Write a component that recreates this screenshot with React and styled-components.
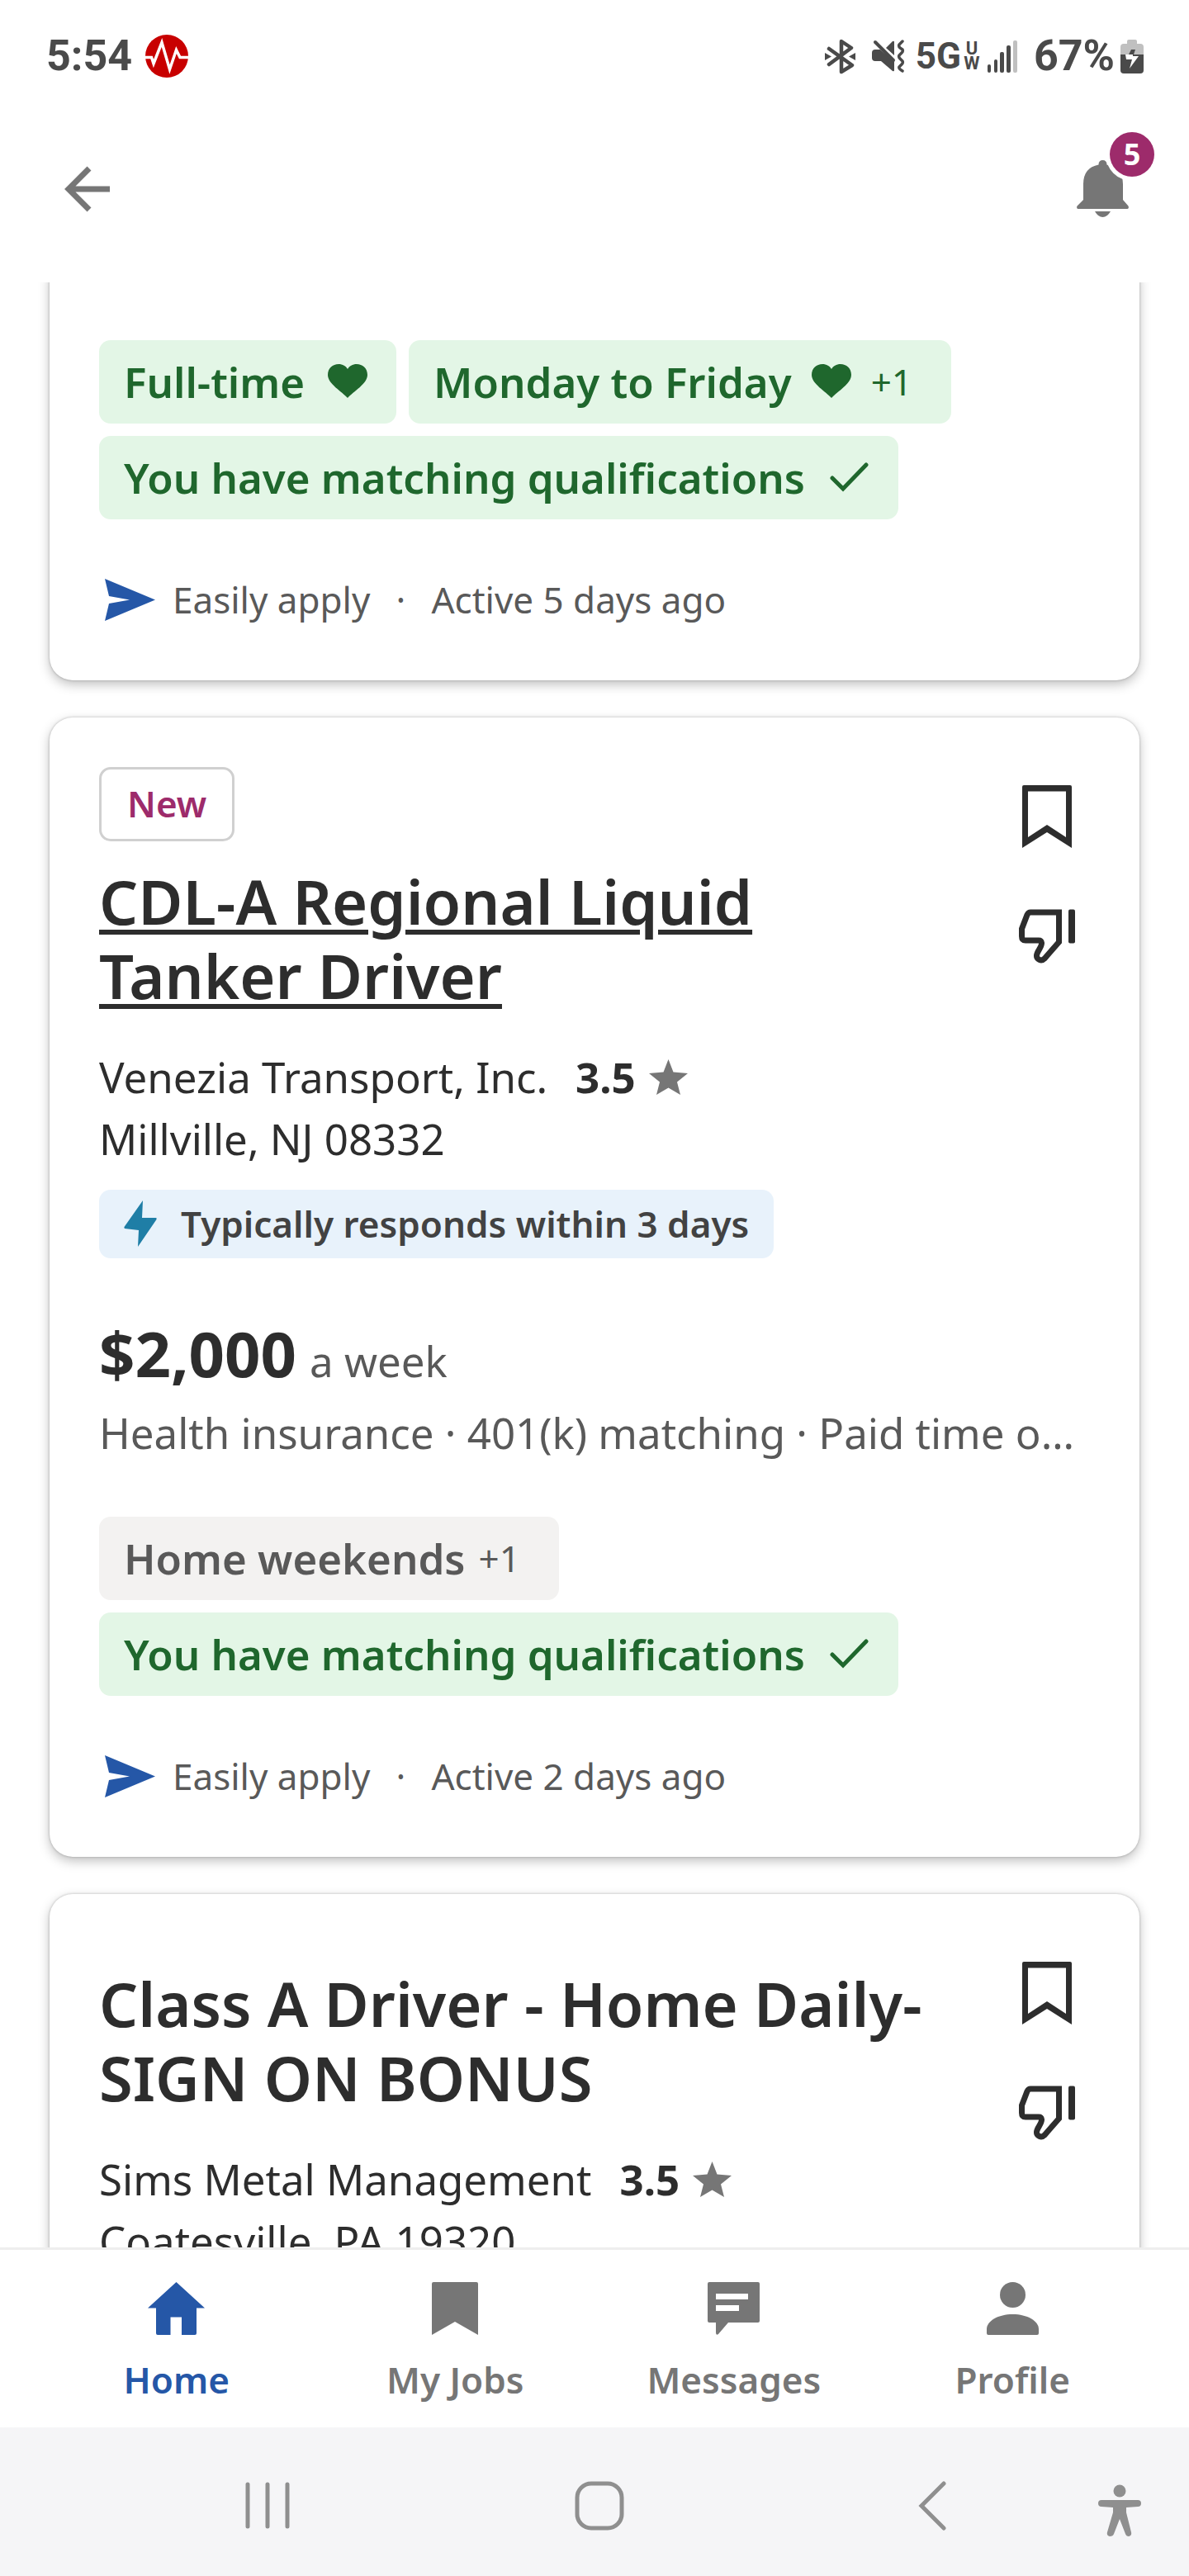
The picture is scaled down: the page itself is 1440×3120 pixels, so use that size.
import styled, { createGlobalStyle } from "styled-components"

const GlobalStyle = createGlobalStyle`
    * {
        box-sizing: border-box;
        margin: 0;
        padding: 0;
    }

    body {
        background-color: #ffffff;
        color: #2d2d2d;
        font-family: "Noto Sans", sans-serif;
    }

    button {
        border: none;
        background-color: transparent;
        font-family: inherit;
        cursor: pointer;
    }

    svg {
        display: block;
        flex-shrink: 0;
    }
`;

const Screen = styled.div`
    height: 100vh;
    display: flex;
    flex-direction: column;
`;

const StatusBarSty = styled.div`
    height: 136px;
    padding: 0 55px 0 56px;
    display: flex;
    align-items: center;
    justify-content: space-between;
    font-family: Roboto, sans-serif;
    font-weight: 700;
    color: #4a4a4a;

    .group {
        display: flex;
        align-items: center;
    }

    .big {
        font-size: 52px;
        line-height: 60px;
    }

    .network {
        font-size: 44px;
        line-height: 60px;
        margin-left: 13px;
    }

    .band {
        width: 22px;
        margin: 0 8px 0 2px;
        font-size: 22px;
        line-height: 18px;
        text-align: center;
    }
`;

const StatusIcon = styled.svg`
    margin-left: ${({ $gap }) => $gap}px;
`;

const HeaderSty = styled.header`
    height: 206px;
    padding: 0 73px 20px 78px;
    display: flex;
    align-items: center;
    justify-content: space-between;

    .bell {
        position: relative;
    }

    .count {
        position: absolute;
        top: -34px;
        right: -31px;
        width: 54px;
        height: 54px;
        border-radius: 50%;
        background-color: #9d2b6b;
        box-shadow: 0 0 0 5px #ffffff;
        color: #ffffff;
        font-size: 36px;
        font-weight: 700;
        line-height: 54px;
        text-align: center;
    }
`;

const Feed = styled.main`
    flex: 1;
    min-height: 0;
    overflow: hidden;
    padding: 0 60px;
    display: flex;
    flex-direction: column;
    gap: 45px;
`;

const CardSty = styled.article`
    flex-shrink: 0;
    margin-top: ${({ $scrolled }) => ($scrolled ? "-30px" : "0")};
    padding: ${({ $scrolled }) => ($scrolled ? "100px" : "60px")} 60px 68px;
    border-radius: 28px;
    background-color: #ffffff;
    box-shadow: 0 0 3px rgba(0, 0, 0, 0.25), 0 5px 14px rgba(0, 0, 0, 0.25);
`;

const CardTop = styled.div`
    display: grid;
    grid-template-columns: 1fr 104px;
    align-items: start;
`;

const Actions = styled.div`
    display: flex;
    flex-direction: column;
    gap: 25px;

    button {
        height: 120px;
        display: flex;
        align-items: center;
        justify-content: center;
    }
`;

const NewTag = styled.span`
    display: inline-block;
    height: 90px;
    padding: 0 31px;
    border: 3px solid #d0d0d0;
    border-radius: 14px;
    vertical-align: top;
    font-size: 44px;
    font-weight: 600;
    line-height: 82px;
    color: #9d2b6b;
`;

const Title = styled.h2`
    margin: 28px 60px 40px 0;
    font-size: 74px;
    font-weight: 600;
    line-height: 90px;

    a {
        color: inherit;
        text-decoration: ${({ $underlined }) => ($underlined ? "underline" : "none")};
        text-decoration-thickness: 6px;
        text-underline-offset: 6px;
    }
`;

const Company = styled.p`
    display: flex;
    align-items: center;
    font-size: 51px;
    line-height: 75px;

    strong {
        margin: 0 16px 0 34px;
        font-weight: 700;
    }
`;

const Responds = styled.p`
    width: fit-content;
    height: 83px;
    margin-top: 24px;
    padding: 0 30px 2px;
    border-radius: 14px;
    display: flex;
    align-items: center;
    gap: 29px;
    background-color: #e8f2fb;
    font-size: 44px;
    font-weight: 600;
    color: #424242;
`;

const Salary = styled.p`
    margin-top: 70px;
    display: flex;
    align-items: baseline;
    gap: 16px;
    font-size: 51px;
    line-height: 60px;
    color: #595959;

    strong {
        font-size: 76px;
        font-weight: 700;
        line-height: 90px;
        color: #2d2d2d;
    }
`;

const Benefits = styled.p`
    margin-top: 14px;
    overflow: hidden;
    font-size: 51px;
    line-height: 75px;
    color: #595959;
    text-overflow: ellipsis;
    white-space: nowrap;
`;

const Chips = styled.ul`
    margin-top: ${({ $first }) => ($first ? "0" : "64px")};
    display: flex;
    flex-wrap: wrap;
    gap: 15px;
    list-style: none;
`;

const Chip = styled.li`
    height: 101px;
    padding: 0 ${({ $end }) => $end || 35}px 2px 30px;
    border-radius: 14px;
    display: flex;
    align-items: center;
    gap: ${({ $gap }) => $gap || 28}px;
    background-color: ${({ $match }) => ($match ? "#e3f6e6" : "#f3f2f1")};
    font-size: 51px;
    font-weight: 600;
    color: ${({ $match }) => ($match ? "#1f672d" : "#595959")};

    .more {
        font-size: 44px;
        font-weight: 400;
    }
`;

const Apply = styled.p`
    margin-top: 67px;
    padding-left: 6px;
    display: flex;
    align-items: center;
    font-size: 44px;
    line-height: 60px;
    color: #595959;

    svg {
        margin-right: 20px;
    }

    .dot {
        width: 74px;
        text-align: center;
    }
`;

const TabBar = styled.nav`
    height: 218px;
    padding: 0 45px;
    border-top: 3px solid #eeeeee;
    display: grid;
    grid-template-columns: repeat(4, 1fr);

    a {
        padding-top: 39px;
        display: flex;
        flex-direction: column;
        align-items: center;
        gap: 24px;
        font-size: 44px;
        font-weight: 600;
        line-height: 60px;
        color: #767676;
        text-decoration: none;
    }

    .active {
        color: #2557a7;
    }
`;

const SystemBar = styled.div`
    height: 180px;
    padding: 10px 58px 0 123px;
    display: grid;
    grid-template-columns: repeat(3, 1fr) 52px;
    align-items: center;
    background-color: #f5f5f7;

    button {
        display: flex;
        justify-content: center;
    }

    .assist {
        padding-top: 12px;
    }
`;

function Heart() {
    return (
        <svg width="48" height="41" viewBox="0 0 48 41" fill="currentColor">
            <path d="M24 41C17 33 0 24 0 13 0 5 6 0 13 0c5 0 9 2.5 11 6 2-3.5 6-6 11-6 7 0 13 5 13 13 0 11-17 20-24 28z" />
        </svg>
    )
}

function Check() {
    return (
        <svg width="50" height="38" viewBox="0 0 50 38" fill="none" stroke="currentColor" strokeWidth="5" strokeLinecap="round">
            <path d="M5 20l13 13L46 4" />
        </svg>
    )
}

function Star() {
    return (
        <svg width="47" height="43" viewBox="0 0 47 43" fill="#767676">
            <path d="M23.5 0l6 15.5L47 17 34 27.5 38 43l-14.5-8.5L9 43l4-15.5L0 17l17.5-1.5z" />
        </svg>
    )
}

function ApplyLine({ active }) {
    return (
        <Apply>
            <svg width="63" height="51" viewBox="0 0 63 51" fill="#2557a7">
                <path d="M1 0l61 25.5L1 51l5-21 25-4.5L6 21z" />
            </svg>
            <span>Easily apply</span>
            <span className="dot">·</span>
            <span>{active}</span>
        </Apply>
    )
}

function JobHead({ job }) {
    return (
        <CardTop>
            <div>
                {job.isNew && <NewTag>New</NewTag>}
                <Title $underlined={job.isNew}>
                    <a href="#job">{job.title}</a>
                </Title>
                <Company>
                    {job.company}
                    <strong>{job.rating}</strong>
                    <Star />
                </Company>
                <Company>{job.location}</Company>
            </div>
            <Actions>
                <button aria-label="Save job">
                    <svg width="60" height="76" viewBox="0 0 60 76" fill="#2d2d2d" fillRule="evenodd">
                        <path d="M2 0H58Q60 0 60 2V76L30 57 0 76V2Q0 0 2 0zM7 7.5V63L30 48 53 63V7.5z" />
                    </svg>
                </button>
                <button aria-label="Not interested">
                    <svg width="68" height="66" viewBox="0 0 68 66" fill="none" stroke="#2d2d2d" strokeWidth="7">
                        <path d="M14 4H48.5V40L31 60C27 64 21 61 21.5 56 22 51 28 46 27.5 41Q27 38 24 38H8Q3.5 38 3.5 33V24L10 7Q11.5 4 14 4z" />
                        <rect x="60" y="0.5" width="8" height="41" rx="2" fill="#2d2d2d" stroke="none" />
                    </svg>
                </button>
            </Actions>
        </CardTop>
    )
}

function StatusBar() {
    return (
        <StatusBarSty>
            <div className="group">
                <span className="big">5:54</span>
                <StatusIcon $gap={16} width="52" height="52" viewBox="0 0 52 52" fill="none">
                    <circle cx="26" cy="26" r="26" fill="#c80000" />
                    <path d="M0 27.5H7.5L10 35 20 9.5 29.5 42 37.5 18.5 42 27.5H52" stroke="#ffffff" strokeWidth="3.5" />
                </StatusIcon>
            </div>
            <div className="group">
                <svg width="37" height="43" viewBox="0 0 37 43" fill="none" stroke="currentColor" strokeWidth="4.5" strokeLinejoin="round" strokeLinecap="round">
                    <path d="M5 12L33 32 20 40V3L32 11 5 31" />
                    <path d="M0 17v9l8-4.5zM37 17v9l-8-4.5z" fill="currentColor" stroke="none" />
                </svg>
                <StatusIcon $gap={20} width="40" height="40" viewBox="0 0 40 40" fill="currentColor">
                    <path d="M4 12H10L27 27V37Q27 39 25 38L11 26H4Q0 26 0 22V16Q0 12 4 12zM17 10l8-8q2-1 2 1v16z" />
                    <path d="M4 3l22 22" stroke="currentColor" strokeWidth="4" strokeLinecap="round" />
                    <path d="M37 2L33 6Q32 8 34 10L37 12Q38 14 36 16L33 19Q32 21 34 23L37 26Q38 28 36 30L33 33Q32 35 37 38" fill="none" stroke="currentColor" strokeWidth="3.5" strokeLinecap="round" />
                </StatusIcon>
                <span className="network">5G</span>
                <span className="band">U W</span>
                <svg width="36" height="39" viewBox="0 0 36 39" fill="currentColor">
                    <rect x="0" y="29" width="4" height="10" rx="2" />
                    <rect x="8" y="23" width="4" height="16" rx="2" />
                    <rect x="15" y="14" width="5" height="25" rx="2" />
                    <rect x="23" y="6" width="5" height="33" rx="2" />
                    <rect x="31" y="0" width="5" height="39" rx="2" fill="#c0c0c0" />
                </svg>
                <StatusIcon as="span" className="big" $gap={20}>67%</StatusIcon>
                <StatusIcon $gap={7} width="28" height="41" viewBox="0 0 28 41">
                    <path d="M8 5V2Q8 0 10 0H18Q20 0 20 2V5H24Q28 5 28 9V18H0V9Q0 5 4 5z" fill="#c0c0c0" />
                    <path d="M0 18H28V37Q28 41 24 41H4Q0 41 0 37z" fill="currentColor" />
                    <path d="M13 12h5l-2 6h-6z" fill="currentColor" />
                    <path d="M6 18h9v2h7L11 35l3-11H7z" fill="#ffffff" />
                </StatusIcon>
            </div>
        </StatusBarSty>
    )
}

function Header() {
    return (
        <HeaderSty>
            <button aria-label="Back">
                <svg width="56" height="56" viewBox="0 0 56 56" fill="none" stroke="#767676" strokeWidth="7">
                    <path d="M30 3L5 28l25 25M5 28H55" />
                </svg>
            </button>
            <button className="bell" aria-label="Notifications">
                <svg width="63" height="70" viewBox="0 0 63 70" fill="#767676">
                    <path d="M31.5 0q5 0 5 5.5Q56 10 56 29V48l6.5 7.5Q64 59 60 59H3Q-1 59 0.5 55.5L8 48V29Q8 9 26.5 5.5 26.5 0 31.5 0z" />
                    <path d="M22 62H41Q37 69 31.5 69T22 62z" />
                </svg>
                <span className="count">5</span>
            </button>
        </HeaderSty>
    )
}

const venezia = {
    isNew: true,
    title: "CDL-A Regional Liquid Tanker Driver",
    company: "Venezia Transport, Inc.",
    rating: "3.5",
    location: "Millville, NJ 08332",
}

const sims = {
    title: "Class A Driver - Home Daily- SIGN ON BONUS",
    company: "Sims Metal Management",
    rating: "3.5",
    location: "Coatesville, PA 19320",
}

export default function App() {
    return (
        <Screen>
            <GlobalStyle />
            <StatusBar />
            <Header />
            <Feed>
                <CardSty $scrolled>
                    <Chips $first>
                        <Chip $match>Full-time <Heart /></Chip>
                        <Chip $match $end={47} $gap={24}>
                            Monday to Friday <Heart />
                            <span className="more">+1</span>
                        </Chip>
                        <Chip $match>You have matching qualifications <Check /></Chip>
                    </Chips>
                    <ApplyLine active="Active 5 days ago" />
                </CardSty>
                <CardSty>
                    <JobHead job={venezia} />
                    <Responds>
                        <svg width="40" height="56" viewBox="0 0 40 56" fill="#1f7ea6">
                            <path d="M23 0L22 21H39Q40 21 39.5 23L17 56 18 36 1 34Q0 33 0.5 32z" />
                        </svg>
                        Typically responds within 3 days
                    </Responds>
                    <Salary><strong>$2,000</strong> a week</Salary>
                    <Benefits>Health insurance · 401(k) matching · Paid time off · Dental insurance</Benefits>
                    <Chips>
                        <Chip $end={47} $gap={16}>
                            Home weekends
                            <span className="more">+1</span>
                        </Chip>
                        <Chip $match>You have matching qualifications <Check /></Chip>
                    </Chips>
                    <ApplyLine active="Active 2 days ago" />
                </CardSty>
                <CardSty>
                    <JobHead job={sims} />
                </CardSty>
            </Feed>
            <TabBar>
                <a href="#home" className="active">
                    <svg width="69" height="64" viewBox="0 0 69 64" fill="currentColor">
                        <path d="M34.5 0L69 31.5H59V62Q59 64 57 64H41V42.5H27.5V64H12Q10 64 10 62V31.5H0z" />
                    </svg>
                    Home
                </a>
                <a href="#my-jobs">
                    <svg width="56" height="64" viewBox="0 0 56 64" fill="currentColor">
                        <path d="M2 0H54Q56 0 56 2V64L28 48 0 64V2Q0 0 2 0z" />
                    </svg>
                    My Jobs
                </a>
                <a href="#messages">
                    <svg width="63" height="64" viewBox="0 0 63 64" fill="currentColor" fillRule="evenodd">
                        <path d="M2 0H61Q63 0 63 2V47Q63 49 61 49H25L13 63Q10 65 10 61V49H2Q0 49 0 47V2Q0 0 2 0zM10 14V21H49V14zM10 28V35H38V28z" />
                    </svg>
                    Messages
                </a>
                <a href="#profile">
                    <svg width="63" height="64" viewBox="0 0 63 64" fill="currentColor">
                        <circle cx="31.5" cy="15.5" r="15.5" />
                        <path d="M0 57C0 47 14 39 31.5 39S63 47 63 57V62Q63 64 61 64H2Q0 64 0 62z" />
                    </svg>
                    Profile
                </a>
            </TabBar>
            <SystemBar>
                <button aria-label="Recent apps">
                    <svg width="54" height="58" viewBox="0 0 54 58" stroke="#8f8f8f" strokeWidth="5" strokeLinecap="round">
                        <path d="M3 3V54M27 3V54M51 3V54" />
                    </svg>
                </button>
                <button aria-label="Home screen">
                    <svg width="60" height="60" viewBox="0 0 60 60" fill="none" stroke="#8f8f8f" strokeWidth="5">
                        <rect x="3" y="3" width="54" height="54" rx="17" />
                    </svg>
                </button>
                <button aria-label="Back">
                    <svg width="34" height="60" viewBox="0 0 34 60" fill="none" stroke="#8f8f8f" strokeWidth="5" strokeLinecap="round">
                        <path d="M31 3L4 30 31 57" />
                    </svg>
                </button>
                <button className="assist" aria-label="Accessibility">
                    <svg width="52" height="64" viewBox="0 0 52 64" fill="#8f8f8f">
                        <circle cx="26" cy="8" r="7.5" />
                        <path d="M4 19H48Q52 19 52 23T48 27L34 28V34L40 58Q41 62 37 63 34 63 33 60L26 42 19 60Q18 63 14 63 10 62 11 58L18 34V28L4 27Q0 27 0 23T4 19z" />
                    </svg>
                </button>
            </SystemBar>
        </Screen>
    )
}
